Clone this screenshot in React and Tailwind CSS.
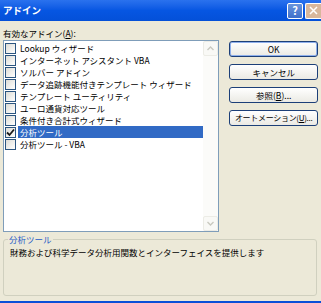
const items = [
  { label: 'Lookup ウィザード' },
  { label: 'インターネット アシスタント VBA' },
  { label: 'ソルバー アドイン' },
  { label: 'データ追跡機能付きテンプレート ウィザード' },
  { label: 'テンプレート ユーティリティ' },
  { label: 'ユーロ通貨対応ツール' },
  { label: '条件付き合計式ウィザード' },
  { label: '分析ツール', checked: true, selected: true },
  { label: '分析ツール - VBA' },
];

const buttons = [
  { label: 'OK', primary: true },
  { label: 'キャンセル' },
  { label: '参照', key: 'B' },
  { label: 'オートメーション', key: 'U', tight: true },
];

function CheckBox({ checked }) {
  return (
    <span className="w-[11px] h-[11px] shrink-0 border border-[#2b5580] bg-gradient-to-br from-[#dcdcd6] to-white flex items-center justify-center">
      {checked && (
        <svg width="9" height="9" viewBox="0 0 9 9">
          <path d="M1 4.5 L3.5 7 L8 1.5" fill="none" stroke="#1a1a1a" strokeWidth="1.8" />
        </svg>
      )}
    </span>
  );
}

function ScrollArrow({ up }) {
  return (
    <div className="h-[15px] border border-[#ecece6] bg-[#f9f9f6] rounded-[2px] flex items-center justify-center">
      <svg width="7" height="5" viewBox="0 0 7 5">
        <path d={up ? 'M0.5 4 L3.5 1 L6.5 4' : 'M0.5 1 L3.5 4 L6.5 1'} fill="none" stroke="#c9c9c0" strokeWidth="1.4" />
      </svg>
    </div>
  );
}

function XpButton({ label, hotkey, primary, tight }) {
  return (
    <div
      className={
        'h-[16px] rounded-[3px] border border-[#1c3f78] bg-gradient-to-b from-white to-[#ebeae4] flex items-center justify-center text-black whitespace-nowrap ' +
        (tight ? 'text-[8px] tracking-[-0.3px] ' : 'text-[8.5px] ') +
        (primary ? 'shadow-[inset_0_0_0_1px_#8fb0ec]' : '')
      }
    >
      {label}
      {hotkey && (
        <>
          (<span className="underline">{hotkey}</span>)...
        </>
      )}
    </div>
  );
}

export default function App() {
  return (
    <div
      className="w-[321px] h-[303px] bg-[#ECE9D8] flex flex-col overflow-hidden"
      style={{ fontFamily: '"Noto Sans CJK JP", "Noto Sans", sans-serif' }}
    >
      <header className="h-[21px] shrink-0 bg-gradient-to-b from-[#2a72ee] via-[#0656e2] to-[#0450d8] flex items-center pl-[3px]">
        <span className="text-white font-bold text-[9.5px] leading-none">アドイン</span>
        <div className="ml-auto flex gap-[2px]">
          <div className="w-[16px] h-[16px] rounded-[2px] border border-white bg-gradient-to-b from-[#6b95dc] to-[#3f6fcb] flex items-center justify-center text-white font-bold text-[11px] leading-none">
            ?
          </div>
          <div className="w-[16px] h-[16px] rounded-l-[2px] border border-r-0 border-white bg-[#d8b79c] flex items-center justify-center">
            <svg width="9" height="9" viewBox="0 0 9 9">
              <path d="M1 1 L8 8 M8 1 L1 8" stroke="#fff" strokeWidth="1.5" />
            </svg>
          </div>
        </div>
      </header>

      <div className="px-[3px] pt-[5px]">
        <div className="h-[14px] text-[8.5px] leading-[14px] text-black">
          有効なアドイン(<span className="underline">A</span>):
        </div>

        <div className="flex h-[192px] gap-[10px]">
          <div className="w-[217px] border border-[#7f9db9] bg-white flex">
            <ul className="flex-1 pt-[1px]">
              {items.map((it) => (
                <li key={it.label} className="h-[12px] flex items-center pl-[1px]">
                  <CheckBox checked={it.checked} />
                  <span
                    className={
                      'ml-[2px] px-[2px] h-[12px] flex items-center text-[8.5px] whitespace-nowrap ' +
                      (it.selected ? 'flex-1 bg-[#316ac5] text-white' : 'text-black')
                    }
                  >
                    {it.label}
                  </span>
                </li>
              ))}
            </ul>
            <div className="w-[15px] flex flex-col bg-[#fbfbf9]">
              <ScrollArrow up />
              <div className="flex-1" />
              <ScrollArrow />
            </div>
          </div>

          <div className="w-[89px] flex flex-col gap-[7px] pt-[1px]">
            {buttons.map((b) => (
              <XpButton key={b.label} label={b.label} hotkey={b.key} primary={b.primary} tight={b.tight} />
            ))}
          </div>
        </div>

        <fieldset className="mt-[2px] mr-[1px] h-[62px] border border-[#d0d0bf] rounded-[3px] px-[6px]">
          <legend className="text-[8.5px] leading-[11px] text-[#1e5bc6] px-[1px] -ml-[2px]">分析ツール</legend>
          <p className="text-[8.5px] text-black leading-[12px] mt-[1px]">
            財務および科学データ分析用関数とインターフェイスを提供します
          </p>
        </fieldset>
      </div>

      <div className="mt-auto h-[2px] bg-[#0a4fd8]" />
    </div>
  );
}
